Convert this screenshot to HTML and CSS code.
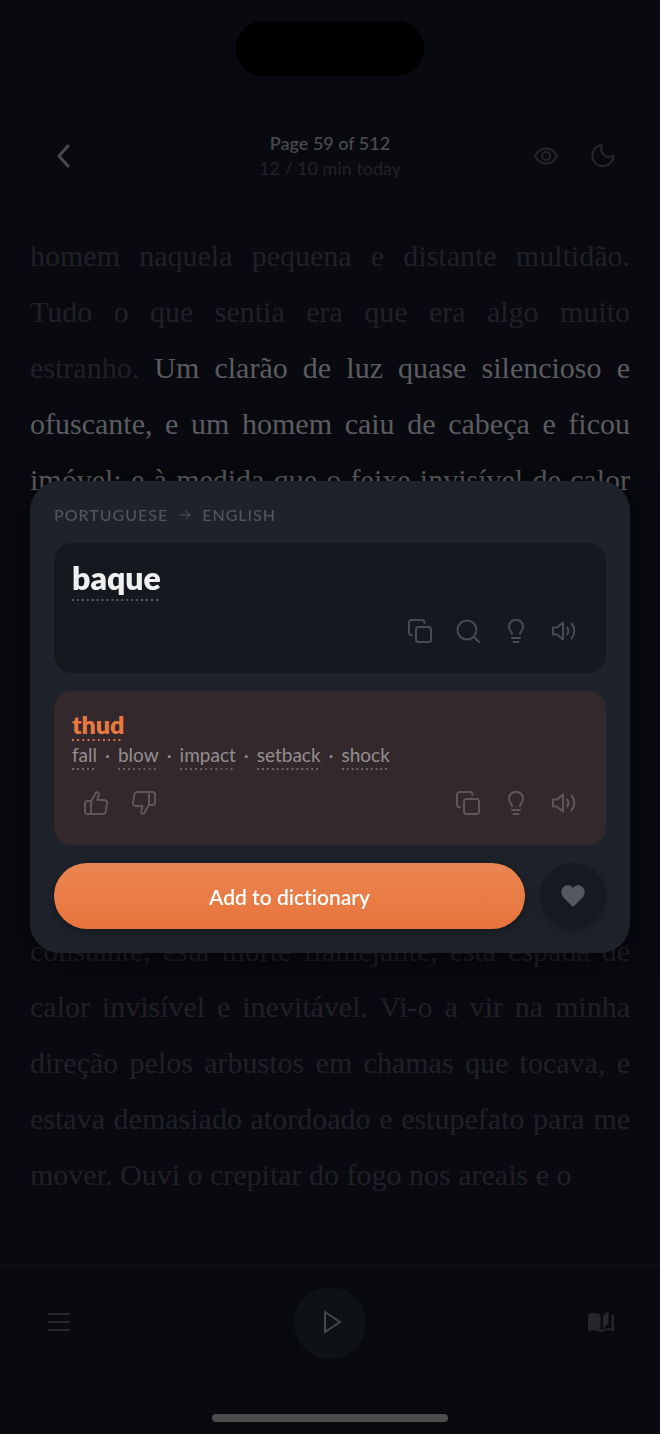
FILE: index.html
```html
<!DOCTYPE html>
<html lang="en">
<head>
  <meta charset="UTF-8">
  <meta name="viewport" content="width=device-width, initial-scale=1.0">
  <title>Reader</title>
  <link rel="stylesheet" href="styles.css">
</head>
<body>
  <!-- shared icons -->
  <svg class="sprite" aria-hidden="true">
    <symbol id="copy" viewBox="0 0 24 24">
      <rect x="8" y="8" width="15" height="15" rx="2.5"/>
      <path d="M4 16H3.5A2.5 2.5 0 0 1 1 13.500V3.500A2.500 2.500 0 0 1 3.500 1H14a2.500 2.500 0 0 1 2.500 2.500V4"/>
    </symbol>
    <symbol id="bulb" viewBox="0 0 24 24">
      <path d="M8 15c0-2-3-3.400-3-7.300a7 7 0 0 1 14 0C19 11.600 16 13 16 15M8 19h8M9.500 23h5"/>
    </symbol>
    <symbol id="speaker" viewBox="0 0 24 24">
      <path d="M1 8.500h4l6-5v17l-6-5H1z"/>
      <path d="M15 8.500a5.500 5.500 0 0 1 0 7M19.500 4.500a11.500 11.500 0 0 1 0 15"/>
    </symbol>
    <symbol id="thumb" viewBox="0 0 24 24">
      <path d="M7 10.500 11.500 2.200C12 1.200 13 1 13.700 1.400c1 .5 1.300 1.400 1 2.500L13.500 9H20c2 0 3.300 1.400 3 3.300l-1.300 8C21.400 22 20.500 23 19 23H3.500A2.500 2.500 0 0 1 1 20.500v-8A2.500 2.500 0 0 1 3.500 10H7zM7 10.500V23"/>
    </symbol>
  </svg>

  <div class="notch"></div>

  <header class="topbar">
    <button class="icon-btn back" aria-label="Back">
      <svg viewBox="0 0 24 24"><path d="M23 2l-9 10 9 10"/></svg>
    </button>
    <div class="progress">
      <h1>Page 59 of 512</h1>
      <p>12 / 10 min today</p>
    </div>
    <div class="topbar-actions">
      <button class="icon-btn" aria-label="Show translations">
        <svg viewBox="0 0 24 24"><path d="M1 12C4 6.500 8 4.500 12 4.500S20 6.500 23 12c-3 5.500-7 7.500-11 7.500S4 17.500 1 12z"/><circle cx="12" cy="12" r="4"/></svg>
      </button>
      <button class="icon-btn" aria-label="Dark mode">
        <svg viewBox="0 0 24 24"><path d="M11 1A10.600 10.600 0 1 0 22.500 11.500C19 13.500 15.500 13.500 13 11 10 8.500 9.500 5 11 1z"/></svg>
      </button>
    </div>
  </header>

  <main class="reader" lang="pt">
    <p>
      <span class="line">homem naquela pequena e distante multidão.</span>
      <span class="line">Tudo o que sentia era que era algo muito</span>
      <span class="line">estranho. <mark>Um clarão de luz quase silencioso e</mark></span>
      <span class="line"><mark>ofuscante, e um homem caiu de cabeça e ficou</mark></span>
      <span class="line"><mark>imóvel; e à medida que o feixe invisível de calor</mark></span>
    </p>
    <p>
      <span class="line">constante, esta morte flamejante, esta espada de</span>
      <span class="line">calor invisível e inevitável. Vi-o a vir na minha</span>
      <span class="line">direção pelos arbustos em chamas que tocava, e</span>
      <span class="line">estava demasiado atordoado e estupefato para me</span>
      <span class="line last">mover. Ouvi o crepitar do fogo nos areais e o</span>
    </p>
  </main>

  <footer class="player">
    <div class="player-row">
      <button class="icon-btn" aria-label="Contents">
        <svg viewBox="0 0 24 24"><path d="M1 3h22M1 11h22M1 19h22"/></svg>
      </button>
      <button class="play" aria-label="Play">
        <svg viewBox="0 0 24 24"><path d="M7 1v20l15-10z"/></svg>
      </button>
      <button class="icon-btn book" aria-label="Dictionary">
        <svg viewBox="0 0 28 24"><path d="M1 3.500C4 1.500 10 1.500 13.500 4v15c-3-2-8-2-12.500 1.500zM16 5l5.500-5v12.500L16 17.500zM24.500 3 27 4.500v16c-4-2-8-2-12.500.8C9.500 18.600 5 18.600 1 20.500L1 19c4-2 9-2 13 0 3-1.800 7-2 10.500-1.200z"/></svg>
      </button>
    </div>
    <div class="home-bar"></div>
  </footer>

  <div class="overlay">
    <section class="popup" role="dialog" aria-label="Translation">
      <p class="langs">
        <span>Portuguese</span>
        <svg viewBox="0 0 12 12"><path d="M1 6h10M7 2l4 4-4 4"/></svg>
        <span>English</span>
      </p>

      <div class="card">
        <h2 class="word dotted">baque</h2>
        <div class="actions">
          <button class="icon-btn" aria-label="Copy"><svg><use href="#copy"/></svg></button>
          <button class="icon-btn" aria-label="Search"><svg viewBox="0 0 24 24"><circle cx="11" cy="11" r="9.500"/><path d="M18 18l5 5"/></svg></button>
          <button class="icon-btn" aria-label="Explain"><svg><use href="#bulb"/></svg></button>
          <button class="icon-btn" aria-label="Listen"><svg><use href="#speaker"/></svg></button>
        </div>
      </div>

      <div class="card translation">
        <h3 class="meaning dotted">thud</h3>
        <p class="alternatives">
          <span class="dotted">fall</span>
          <span>·</span>
          <span class="dotted">blow</span>
          <span>·</span>
          <span class="dotted">impact</span>
          <span>·</span>
          <span class="dotted">setback</span>
          <span>·</span>
          <span class="dotted">shock</span>
        </p>
        <div class="actions">
          <button class="icon-btn" aria-label="Good translation"><svg><use href="#thumb"/></svg></button>
          <button class="icon-btn flip" aria-label="Bad translation"><svg><use href="#thumb"/></svg></button>
          <span class="spacer"></span>
          <button class="icon-btn" aria-label="Copy"><svg><use href="#copy"/></svg></button>
          <button class="icon-btn" aria-label="Explain"><svg><use href="#bulb"/></svg></button>
          <button class="icon-btn" aria-label="Listen"><svg><use href="#speaker"/></svg></button>
        </div>
      </div>

      <div class="popup-footer">
        <button class="add">Add to dictionary</button>
        <button class="favorite" aria-label="Favorite">
          <svg viewBox="0 0 24 22"><path d="M12 22 2.500 12.500C-1 9 0 4 3 1.700 6-.6 10 .1 12 3c2-2.900 6-3.600 9-1.300 3 2.300 4 7.300.5 10.800z"/></svg>
        </button>
      </div>
    </section>
  </div>
</body>
</html>
```

FILE: styles.css
```css
* {
  box-sizing: border-box;
  margin: 0;
  padding: 0;
}

body {
  min-height: 100vh;
  display: flex;
  flex-direction: column;
  background: #090a0f;
  color: #47484c;
  font-family: Lato, "Open Sans", sans-serif;
}

button {
  border: none;
  background: none;
  color: inherit;
  font: inherit;
  cursor: pointer;
}

svg {
  display: block;
  width: 24px;
  height: 24px;
  overflow: visible;
  fill: none;
  stroke: currentColor;
  stroke-width: 2;
  stroke-linecap: round;
  stroke-linejoin: round;
}

.sprite {
  display: none;
}

.icon-btn {
  width: 48px;
  height: 48px;
  display: grid;
  place-items: center;
}

.notch {
  width: 188px;
  height: 55px;
  margin: 21px auto 0;
  border-radius: 27px;
  background: #000;
}

/* Top bar */
.topbar {
  display: grid;
  grid-template-columns: 1fr auto 1fr;
  align-items: center;
  margin-top: 52px;
  height: 56px;
  padding: 0 33px;
}

.back svg {
  stroke-width: 3;
}

.progress {
  text-align: center;
  line-height: 25px;
}

.progress h1 {
  font-size: 18px;
  font-weight: 600;
}

.progress p {
  font-size: 18px;
  color: #222328;
}

.topbar-actions {
  display: flex;
  justify-content: flex-end;
  gap: 9px;
  color: #26272c;
}

/* Book text */
.reader {
  flex: 1;
  display: flex;
  flex-direction: column;
  justify-content: space-between;
  padding: 44px 30px 60px;
  font-family: "Liberation Serif", serif;
  font-size: 30px;
  line-height: 56px;
  color: #202126;
}

.line {
  display: block;
  text-align: justify;
  text-align-last: justify;
  white-space: nowrap;
}

.line.last {
  text-align-last: left;
}

mark {
  background: none;
  color: #5b5c60;
}

/* Bottom player */
.player {
  border-top: 4px solid #0e0f14;
}

.player-row {
  display: flex;
  justify-content: space-between;
  align-items: center;
  padding: 20px 35px 0;
  color: #26272c;
}

.player-row svg {
  stroke-linecap: butt;
  stroke-linejoin: miter;
}

.play {
  width: 72px;
  height: 72px;
  display: grid;
  place-items: center;
  border-radius: 50%;
  background: #0e1216;
  color: #47484c;
}

.book svg {
  width: 28px;
  fill: currentColor;
  stroke: none;
}

.home-bar {
  width: 236px;
  height: 8px;
  margin: 55px auto 12px;
  border-radius: 4px;
  background: #4c4c4c;
}

/* Translation popup */
.overlay {
  position: fixed;
  inset: 0;
  display: flex;
  align-items: center;
  padding: 0 30px;
}

.popup {
  flex: 1;
  display: flex;
  flex-direction: column;
  gap: 18px;
  padding: 24px;
  border-radius: 30px;
  background: #1e222a;
  box-shadow: 0 8px 36px rgba(0, 0, 0, 0.5);
}

.langs {
  display: flex;
  align-items: center;
  gap: 11px;
  line-height: 20px;
  font-size: 16px;
  font-weight: 500;
  letter-spacing: 1px;
  text-transform: uppercase;
  color: #52555c;
}

.langs svg {
  width: 12px;
  height: 12px;
  stroke-width: 1;
}

.card {
  padding: 18px;
  border-radius: 18px;
  background: #141920;
  color: #484b51;
}

.translation {
  background: #33292c;
  color: #5f5658;
}

/* dotted underline, spaced wider than a dotted border */
.dotted {
  --dot: #6f686a;
  background: linear-gradient(to right, var(--dot) 2px, transparent 2px) bottom left / 5px 2px;
  background-repeat: round no-repeat;
}

.word {
  --dot: #5a5e64;
  width: fit-content;
  margin-bottom: 6px;
  padding-bottom: 6px;
  line-height: 34px;
  font-size: 32px;
  font-weight: 800;
  color: #f0f0f1;
}

.meaning {
  --dot: #e8793f;
  width: fit-content;
  padding-bottom: 2px;
  line-height: 30px;
  font-size: 25px;
  font-weight: 800;
  color: #e8793f;
}

.alternatives {
  display: flex;
  gap: 8px;
  margin-bottom: 9px;
  line-height: 28px;
  font-size: 19px;
  color: #948e90;
}

.alternatives .dotted {
  padding-bottom: 1px;
}

.actions {
  display: flex;
  justify-content: flex-end;
}

.spacer {
  flex: 1;
}

.flip svg {
  transform: rotate(180deg);
}

.popup-footer {
  display: flex;
  gap: 15px;
}

.add {
  flex: 1;
  height: 66px;
  border-radius: 33px;
  background: linear-gradient(#eb8552, #e8743b);
  box-shadow: 0 3px 12px rgba(0, 0, 0, 0.3);
  color: #fff;
  font-size: 21px;
  font-weight: 600;
  font-variant-ligatures: none;
}

.favorite {
  width: 66px;
  height: 66px;
  display: grid;
  place-items: center;
  border-radius: 50%;
  background: #151a21;
  box-shadow: 0 3px 12px rgba(0, 0, 0, 0.2);
  color: #55585c;
}

.favorite svg {
  height: 22px;
  fill: currentColor;
  stroke: none;
}
```
